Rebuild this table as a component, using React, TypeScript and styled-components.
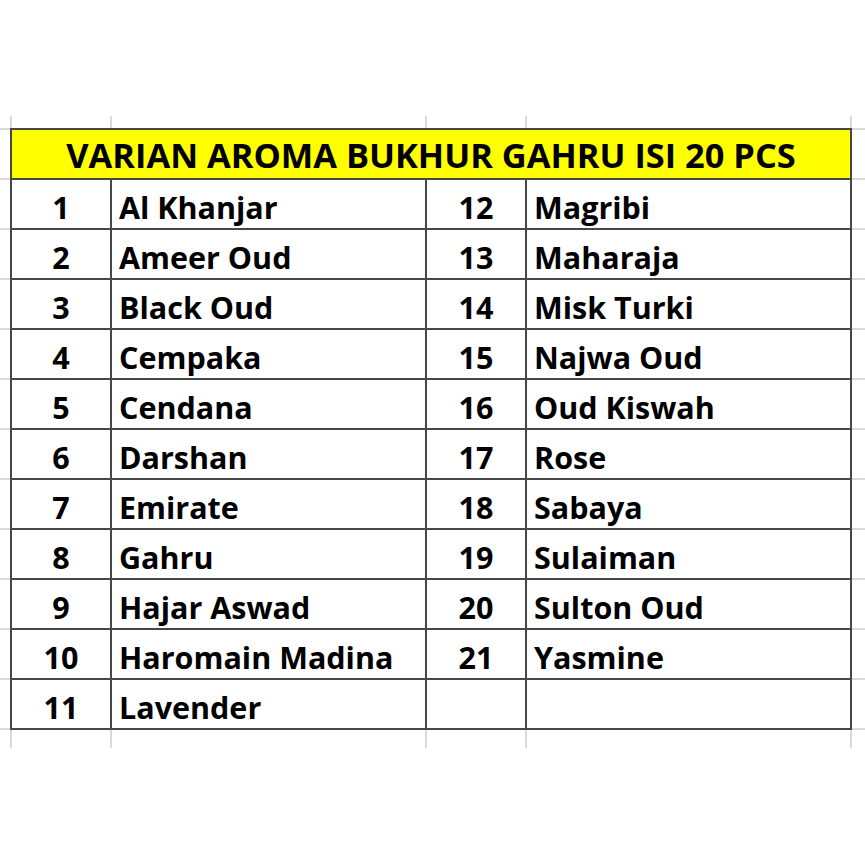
import styled, { createGlobalStyle } from "styled-components";

const GlobalStyle = createGlobalStyle`
  html, body {
    margin: 0;
    padding: 0;
    background: #ffffff;
  }

  body {
    font-family: "Open Sans", "Liberation Sans", sans-serif;
  }
`;

const leftList = [
  "Al Khanjar",
  "Ameer Oud",
  "Black Oud",
  "Cempaka",
  "Cendana",
  "Darshan",
  "Emirate",
  "Gahru",
  "Hajar Aswad",
  "Haromain Madina",
  "Lavender",
];

const rightList = [
  "Magribi",
  "Maharaja",
  "Misk Turki",
  "Najwa Oud",
  "Oud Kiswah",
  "Rose",
  "Sabaya",
  "Sulaiman",
  "Sulton Oud",
  "Yasmine",
];

const faint = "#d9d9d9";
const line = "#474747";

const App = () => {
  const rows = leftList.map((name, i) => ({
    leftNo: i + 1,
    leftName: name,
    rightNo: rightList[i] ? i + 12 : null,
    rightName: rightList[i] ?? "",
  }));

  return (
    <>
      <GlobalStyle />
      <Page>
        <Sheet>
          <Table>
            <Title>VARIAN AROMA BUKHUR GAHRU ISI 20 PCS</Title>

            {rows.map((row) => (
              <Row key={row.leftNo}>
                <NumberCell>{row.leftNo}</NumberCell>
                <NameCell>{row.leftName}</NameCell>
                <NumberCell>{row.rightNo ?? ""}</NumberCell>
                <NameCell>{row.rightName}</NameCell>
              </Row>
            ))}
          </Table>
        </Sheet>
      </Page>
    </>
  );
};

const Page = styled.div`
  width: 865px;
  height: 865px;
  padding-top: 116px;
  box-sizing: border-box;
  overflow: hidden;
`;

const Sheet = styled.div`
  padding: 12px 0 18px 10px;
  background:
    linear-gradient(${faint}, ${faint}) 10px 0 / 2px 100% no-repeat,
    linear-gradient(${faint}, ${faint}) 110px 0 / 2px 100% no-repeat,
    linear-gradient(${faint}, ${faint}) 425px 0 / 2px 100% no-repeat,
    linear-gradient(${faint}, ${faint}) 525px 0 / 2px 100% no-repeat,
    linear-gradient(${faint}, ${faint}) 850px 0 / 2px 100% no-repeat,
    repeating-linear-gradient(
      to bottom,
      transparent 0 12px,
      ${faint} 12px 14px,
      transparent 14px 50px
    );
`;

const Table = styled.div`
  width: 842px;
  box-sizing: border-box;
  display: grid;
  grid-template-columns: 98px 313px 98px 323px;
  grid-auto-rows: 48px;
  gap: 2px;
  border: 2px solid ${line};
  background: ${line};
`;

const Row = styled.div`
  display: contents;
`;

const Cell = styled.div`
  background: #ffffff;
  color: #000000;
  font-weight: 700;
  font-size: 30.5px;
  line-height: 1;
  display: flex;
  align-items: center;
  padding-top: 7px;
  box-sizing: border-box;
  white-space: nowrap;
`;

const Title = styled(Cell)`
  grid-column: 1 / -1;
  background: #ffff00;
  justify-content: center;
  font-size: 34.4px;
  padding-top: 3px;
`;

const NumberCell = styled(Cell)`
  justify-content: center;
`;

const NameCell = styled(Cell)`
  padding-left: 7px;
`;

export default App;
